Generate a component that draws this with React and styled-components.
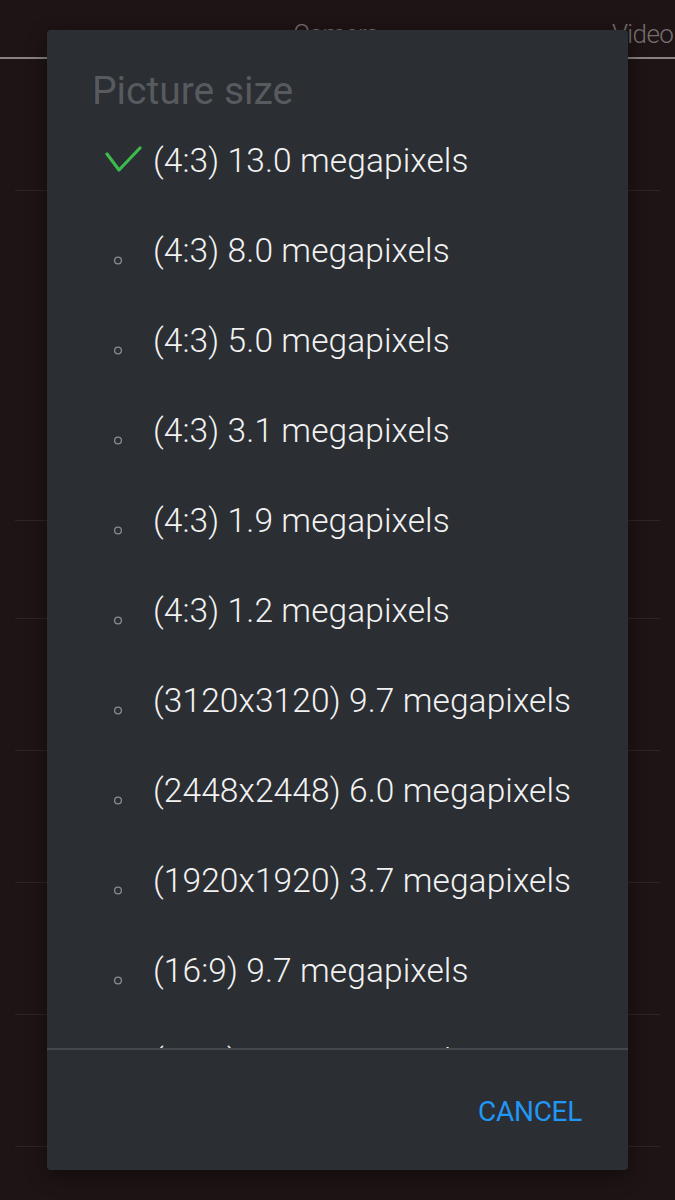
import React from 'react';
import styled, { createGlobalStyle } from 'styled-components';

const Global = createGlobalStyle`
  html, body { margin: 0; padding: 0; background: #1f1415; }
  body { font-family: Roboto, "Noto Sans", "Liberation Sans", sans-serif; }
  * { box-sizing: border-box; }
`;

const Screen = styled.div`
  position: relative;
  width: 675px;
  height: 1200px;
  overflow: hidden;
  background: #1f1415;
`;

const TabBar = styled.div`
  display: flex;
  align-items: flex-start;
  height: 59px;
  padding: 18px 0 0 293px;
  gap: 233px;
  border-bottom: 2px solid #8a8383;
`;

const Tab = styled.div`
  font-size: 26px;
  font-weight: 300;
  line-height: 32px;
  letter-spacing: -0.6px;
  color: #756e6e;
  white-space: nowrap;
`;

const SettingsList = styled.div`
  display: flex;
  flex-direction: column;
`;

const SettingsRow = styled.div`
  height: ${(p) => p.$h}px;
  margin: 0 15px;
  border-bottom: 1px solid #2f2526;
`;

const Dialog = styled.div`
  position: absolute;
  top: 30px;
  left: 47px;
  width: 581px;
  height: 1140px;
  background: #2b2e33;
  border-radius: 4px;
  display: flex;
  flex-direction: column;
  overflow: hidden;
  box-shadow: 0 6px 20px rgba(0, 0, 0, 0.45);
`;

const Title = styled.h2`
  margin: 0;
  padding: 41px 0 4px 45px;
  font-size: 39px;
  line-height: 40px;
  font-weight: 400;
  color: #575a5e;
`;

const OptionList = styled.ul`
  list-style: none;
  margin: 0;
  padding: 0;
  height: 933px;
  flex: none;
  overflow: hidden;
`;

const Option = styled.li`
  display: flex;
  align-items: center;
  height: 90px;
  flex: none;
  padding-left: 57px;
  gap: 11px;
  font-size: 33.5px;
  font-weight: 300;
  letter-spacing: 0.1px;
  color: #f2f2f2;
  white-space: nowrap;
`;

const Divider = styled.div`
  height: 2px;
  flex: none;
  background: #45484c;
`;

const Footer = styled.div`
  flex: 1;
  display: flex;
  align-items: center;
  justify-content: flex-end;
  padding: 4px 46px 0 0;
`;

const CancelButton = styled.button`
  background: none;
  border: none;
  padding: 0;
  font-family: inherit;
  font-size: 28px;
  line-height: 32px;
  letter-spacing: -0.3px;
  color: #2196f3;
  cursor: pointer;
`;

const Marker = ({ selected }) => (
  <svg width="38" height="36" viewBox="0 0 38 36" style={{ flex: 'none' }}>
    {selected ? (
      <polyline
        points="3,12 15,28 36,6"
        fill="none"
        stroke="#3cba4c"
        strokeWidth="3.2"
        strokeLinecap="round"
        strokeLinejoin="round"
      />
    ) : (
      <circle cx="14" cy="28.5" r="3.4" fill="none" stroke="#8a8c90" strokeWidth="1.3" />
    )}
  </svg>
);

const options = [
  '(4:3) 13.0 megapixels',
  '(4:3) 8.0 megapixels',
  '(4:3) 5.0 megapixels',
  '(4:3) 3.1 megapixels',
  '(4:3) 1.9 megapixels',
  '(4:3) 1.2 megapixels',
  '(3120x3120) 9.7 megapixels',
  '(2448x2448) 6.0 megapixels',
  '(1920x1920) 3.7 megapixels',
  '(16:9) 9.7 megapixels',
  '(16:9) 5.0 megapixels',
  '(16:9) 2.1 megapixels',
];

const rows = [132, 330, 98, 132, 132, 132, 132];

export default function App() {
  return (
    <Screen>
      <Global />
      <TabBar>
        <Tab>Camera</Tab>
        <Tab>Video</Tab>
      </TabBar>
      <SettingsList>
        {rows.map((h, i) => (
          <SettingsRow key={i} $h={h} />
        ))}
      </SettingsList>
      <Dialog role="dialog">
        <Title>Picture size</Title>
        <OptionList>
          {options.map((o, i) => (
            <Option key={o}>
              <Marker selected={i === 0} />
              <span>{o}</span>
            </Option>
          ))}
        </OptionList>
        <Divider />
        <Footer>
          <CancelButton>CANCEL</CancelButton>
        </Footer>
      </Dialog>
    </Screen>
  );
}
